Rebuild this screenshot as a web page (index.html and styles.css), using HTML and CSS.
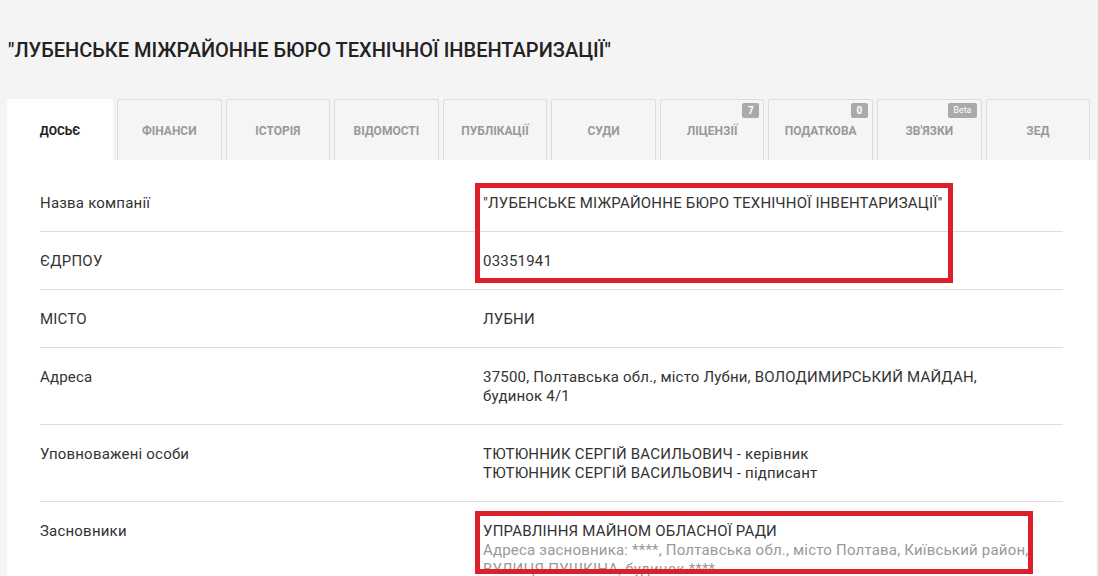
FILE: index.html
```html
<!DOCTYPE html>
<html lang="uk">
<head>
<meta charset="utf-8">
<link rel="stylesheet" href="styles.css">
</head>
<body>
<div class="page">
  <h1 class="title">"ЛУБЕНСЬКЕ МІЖРАЙОННЕ БЮРО ТЕХНІЧНОЇ ІНВЕНТАРИЗАЦІЇ"</h1>
  <nav class="tabs">
    <div class="tab active">ДОСЬЄ</div>
    <div class="tab">ФІНАНСИ</div>
    <div class="tab">ІСТОРІЯ</div>
    <div class="tab">ВІДОМОСТІ</div>
    <div class="tab">ПУБЛІКАЦІЇ</div>
    <div class="tab">СУДИ</div>
    <div class="tab">ЛІЦЕНЗІЇ<span class="badge">7</span></div>
    <div class="tab">ПОДАТКОВА<span class="badge">0</span></div>
    <div class="tab">ЗВ'ЯЗКИ<span class="badge beta">Beta</span></div>
    <div class="tab">ЗЕД</div>
  </nav>
  <section class="panel">
    <div class="row">
      <div class="label">Назва компанії</div>
      <div class="value">"ЛУБЕНСЬКЕ МІЖРАЙОННЕ БЮРО ТЕХНІЧНОЇ ІНВЕНТАРИЗАЦІЇ"</div>
    </div>
    <div class="row">
      <div class="label">ЄДРПОУ</div>
      <div class="value">03351941</div>
    </div>
    <div class="row">
      <div class="label">МІСТО</div>
      <div class="value">ЛУБНИ</div>
    </div>
    <div class="row">
      <div class="label">Адреса</div>
      <div class="value">37500, Полтавська обл., місто Лубни, ВОЛОДИМИРСЬКИЙ МАЙДАН,<br>будинок 4/1</div>
    </div>
    <div class="row">
      <div class="label">Уповноважені особи</div>
      <div class="value">ТЮТЮННИК СЕРГІЙ ВАСИЛЬОВИЧ - керівник<br>ТЮТЮННИК СЕРГІЙ ВАСИЛЬОВИЧ - підписант</div>
    </div>
    <div class="row">
      <div class="label">Засновники</div>
      <div class="value">УПРАВЛІННЯ МАЙНОМ ОБЛАСНОЇ РАДИ<div class="muted">Адреса засновника: ****, Полтавська обл., місто Полтава, Київський район,<br>ВУЛИЦЯ ПУШКІНА, будинок ****</div></div>
    </div>
    <div class="mark mark-top"></div>
    <div class="mark mark-bottom"></div>
  </section>
</div>
</body>
</html>
```

FILE: styles.css
```css
html, body {
  margin: 0;
  padding: 0;
  background: #f4f4f4;
  font-family: Roboto, "Liberation Sans", Arial, sans-serif;
  color: #333;
  overflow: hidden;
}

.page {
  padding: 0 2px 0 7px;
}

.title {
  margin: 0;
  padding: 37px 0 0 1px;
  font-size: 20px;
  line-height: 26px;
  font-weight: 500;
  color: #222;
}

.tabs {
  display: flex;
  gap: 4px;
  margin-top: 36px;
  padding-right: 6px;
}

.tab {
  position: relative;
  flex: 1;
  height: 59px;
  display: flex;
  align-items: center;
  justify-content: center;
  background: #f5f5f5;
  border: 1px solid #dcdcdc;
  border-bottom: none;
  border-radius: 3px 3px 0 0;
  font-size: 12px;
  font-weight: 700;
  color: #999;
  padding-top: 1px;
  box-sizing: content-box;
}

.tab.active {
  background: #fff;
  border-color: #fff;
  color: #222;
  flex: 0 0 104px;
}

.badge {
  position: absolute;
  top: 3px;
  right: 4px;
  min-width: 17px;
  height: 15px;
  padding: 0 3px;
  box-sizing: border-box;
  background: #aaa;
  color: #fff;
  border-radius: 2px;
  font-size: 10px;
  font-weight: 700;
  line-height: 15px;
  text-align: center;
}

.badge.beta {
  font-size: 9px;
  font-weight: 400;
  padding: 0 5px;
}

.panel {
  position: relative;
  background: #fff;
  padding: 14px 33px 0 33px;
  height: 420px;
}

.row {
  display: grid;
  grid-template-columns: 443px 1fr;
  padding: 20px 0 18px;
  border-bottom: 1px solid #dedede;
  font-size: 15px;
  line-height: 19px;
  letter-spacing: 0.2px;
}

.row:last-of-type {
  border-bottom: none;
}

.label {
  color: #333;
}

.value {
  color: #333;
  white-space: nowrap;
}

.muted {
  color: #999;
}

.mark {
  position: absolute;
  border: 5px solid #dc1f2b;
  box-sizing: border-box;
}

.mark-top {
  left: 468px;
  top: 23px;
  width: 478px;
  height: 100px;
}

.mark-bottom {
  left: 468px;
  top: 351px;
  width: 558px;
  height: 63px;
}
```
